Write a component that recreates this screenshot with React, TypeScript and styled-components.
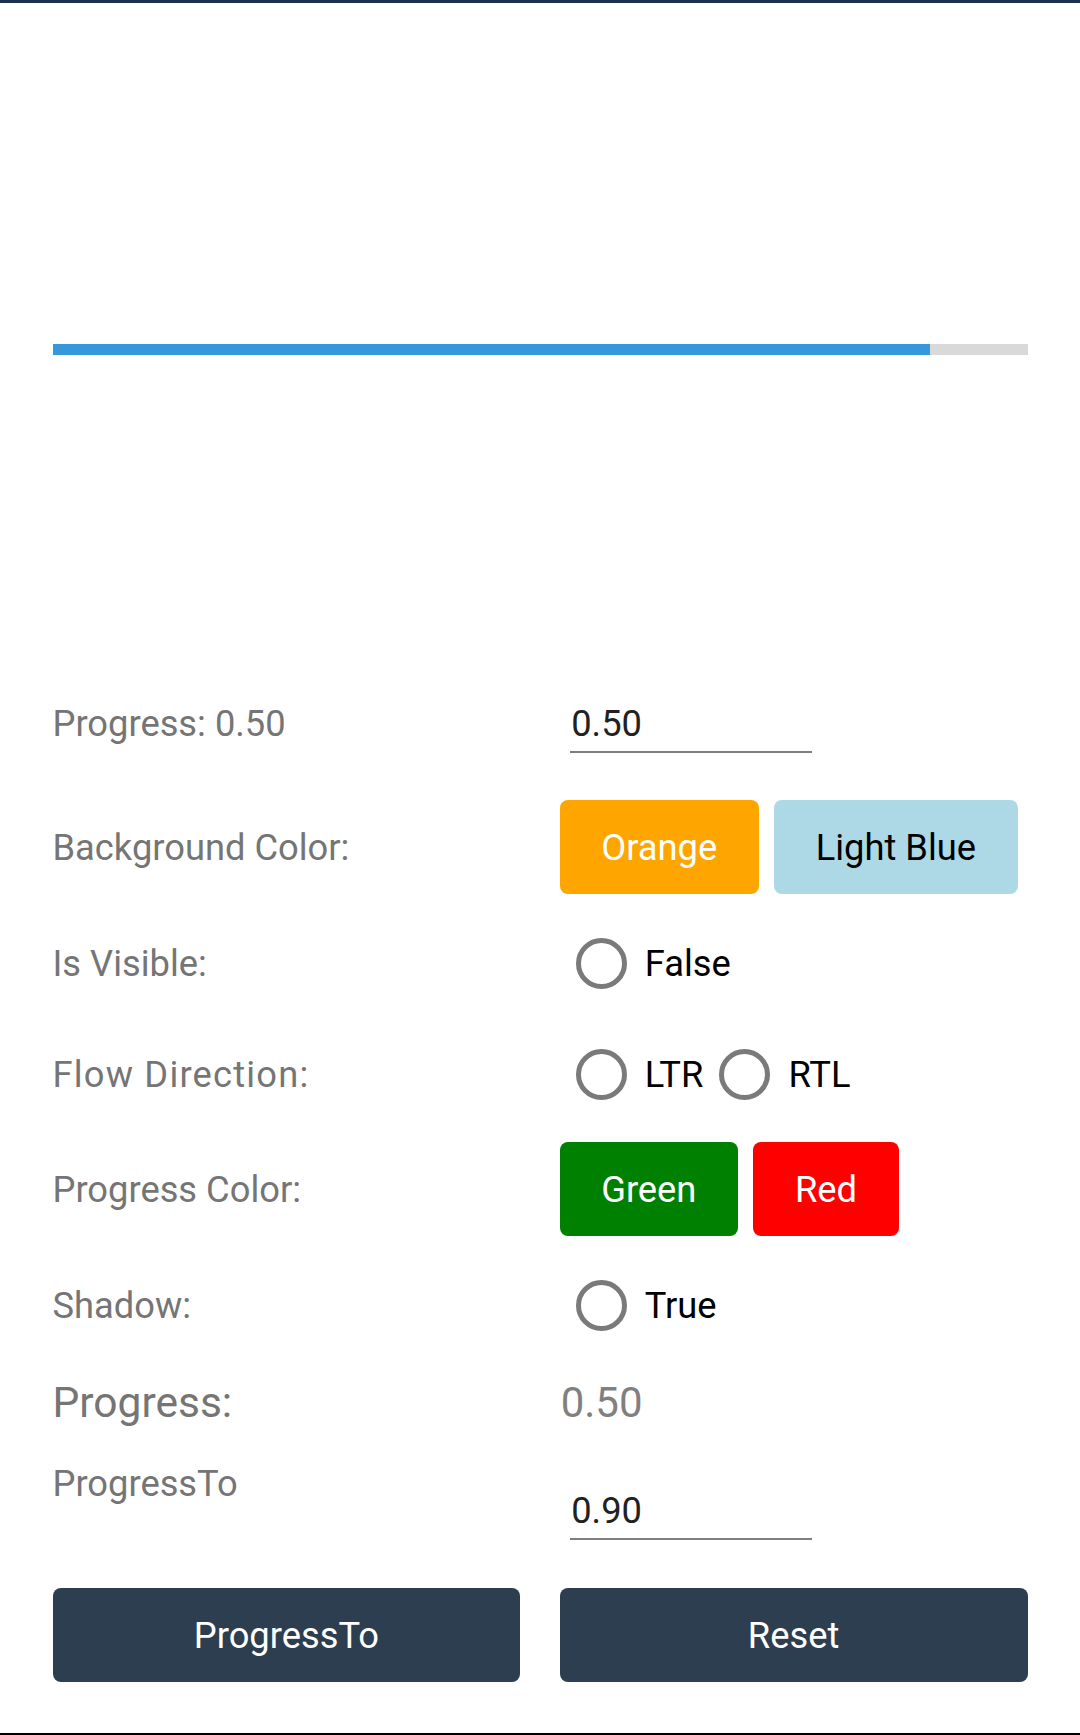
import React from "react";
import styled, { createGlobalStyle } from "styled-components";

const GlobalStyle = createGlobalStyle`
  html, body {
    margin: 0;
    padding: 0;
    background: #ffffff;
    font-family: Roboto, "Noto Sans", "Liberation Sans", sans-serif;
  }
  * { box-sizing: border-box; }
`;

const Page = styled.div`
  width: 1080px;
  height: 1735px;
  display: flex;
  flex-direction: column;
  background: #ffffff;
`;

const StatusStrip = styled.div`
  height: 3px;
  flex: none;
  background: #1b314d;
`;

const BarArea = styled.div`
  height: 669px;
  flex: none;
  padding: 341px 52.5px 0;
`;

const Track = styled.div`
  height: 10.5px;
  background: #d9d9d9;
  display: flex;
`;

const Fill = styled.div`
  height: 100%;
  background: #3498db;
`;

const Form = styled.div`
  display: grid;
  grid-template-columns: 1fr 1fr;
  grid-template-rows: 102px 94px 86px 83px 94px 86px 56px 105px 94px;
  column-gap: 39.375px;
  row-gap: 26.25px;
  padding: 0 52.5px;
  flex: none;
`;

const Label = styled.div<{ $top?: boolean; $big?: boolean; $spacing?: number }>`
  font-size: ${(p) => (p.$big ? "42.5px" : "36.3px")};
  line-height: ${(p) => (p.$big ? "49px" : "43px")};
  letter-spacing: ${(p) => (p.$spacing ? `${p.$spacing}px` : "normal")};
  color: #757575;
  align-self: ${(p) => (p.$top ? "start" : "center")};
  padding-top: ${(p) => (p.$top ? "5px" : "0")};
  white-space: nowrap;
`;

const Value = styled.div`
  font-size: 42px;
  line-height: 49px;
  color: #808080;
  align-self: center;
  padding-left: 1px;
`;

const Entry = styled.div<{ $end?: boolean }>`
  width: 262.5px;
  height: 102px;
  padding: 29.5px 10.5px 0;
  align-self: ${(p) => (p.$end ? "end" : "start")};
`;

const EntryText = styled.div`
  font-size: 36.3px;
  line-height: 43px;
  color: #212121;
  padding: 0 0 6px 1px;
  border-bottom: 2px solid #7f7f7f;
`;

const ButtonRow = styled.div`
  display: flex;
  gap: 15.5px;
  align-items: stretch;
`;

const ColorButton = styled.button<{ $bg: string; $fg: string }>`
  height: 94px;
  padding: 0 41.5px;
  border: none;
  border-radius: 8px;
  background: ${(p) => p.$bg};
  color: ${(p) => p.$fg};
  font-family: inherit;
  font-size: 36.3px;
  line-height: 43px;
  white-space: nowrap;
`;

const ActionButton = styled.button`
  height: 94px;
  width: 100%;
  border: none;
  border-radius: 8px;
  background: #2c3e50;
  color: #ffffff;
  font-family: inherit;
  font-size: 36.3px;
  line-height: 43px;
`;

const RadioGroup = styled.div`
  display: flex;
  align-items: center;
  gap: 0;
`;

const RadioOption = styled.label`
  display: flex;
  align-items: center;
  gap: 18px;
  padding-left: 16px;
  font-size: 36.3px;
  line-height: 43px;
  color: #000000;
`;

const RadioRing = styled.span`
  width: 51px;
  height: 51px;
  border-radius: 50%;
  border: 5px solid #7a7a7a;
  flex: none;
`;

const Spacer = styled.div`
  flex: 1;
`;

const BottomLine = styled.div`
  height: 2px;
  flex: none;
  background: #000000;
`;

const Radio: React.FC<{ label: string }> = ({ label }) => (
  <RadioOption>
    <RadioRing />
    <span>{label}</span>
  </RadioOption>
);

export default function App() {
  const progress = 0.9;
  return (
    <>
      <GlobalStyle />
      <Page>
        <StatusStrip />
        <BarArea>
          <Track>
            <Fill style={{ width: `${progress * 100}%` }} />
          </Track>
        </BarArea>
        <Form>
          <Label>Progress: 0.50</Label>
          <Entry>
            <EntryText>0.50</EntryText>
          </Entry>

          <Label>Background Color:</Label>
          <ButtonRow>
            <ColorButton $bg="#ffa500" $fg="#ffffff">Orange</ColorButton>
            <ColorButton $bg="#add8e6" $fg="#000000">Light Blue</ColorButton>
          </ButtonRow>

          <Label>Is Visible:</Label>
          <RadioGroup>
            <Radio label="False" />
          </RadioGroup>

          <Label $spacing={1.2}>Flow Direction:</Label>
          <RadioGroup>
            <Radio label="LTR" />
            <Radio label="RTL" />
          </RadioGroup>

          <Label>Progress Color:</Label>
          <ButtonRow>
            <ColorButton $bg="#008000" $fg="#ffffff">Green</ColorButton>
            <ColorButton $bg="#ff0000" $fg="#ffffff">Red</ColorButton>
          </ButtonRow>

          <Label>Shadow:</Label>
          <RadioGroup>
            <Radio label="True" />
          </RadioGroup>

          <Label $big>Progress:</Label>
          <Value>0.50</Value>

          <Label $top>ProgressTo</Label>
          <Entry $end>
            <EntryText>0.90</EntryText>
          </Entry>

          <ActionButton>ProgressTo</ActionButton>
          <ActionButton>Reset</ActionButton>
        </Form>
        <Spacer />
        <BottomLine />
      </Page>
    </>
  );
}
